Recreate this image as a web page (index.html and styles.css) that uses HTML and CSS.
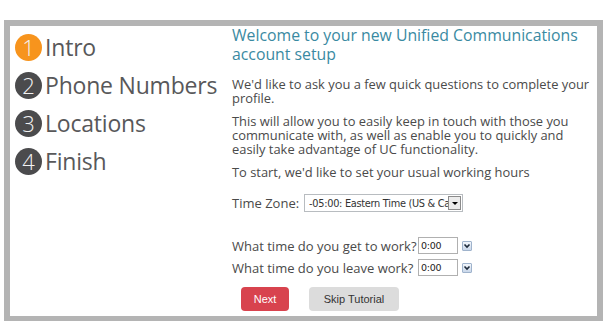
FILE: index.html
```html
<!DOCTYPE html>
<html lang="en">
<head>
    <meta charset="UTF-8">
    <meta name="viewport" content="width=device-width, initial-scale=1.0">
    <title>UC account setup</title>
    <link rel="stylesheet" href="styles.css">
</head>
<body>
    <div class="wizard">
        <ul class="steps">
            <li class="step current"><span class="num">1</span>Intro</li>
            <li class="step"><span class="num">2</span>Phone Numbers</li>
            <li class="step"><span class="num">3</span>Locations</li>
            <li class="step"><span class="num">4</span>Finish</li>
        </ul>

        <div class="content">
            <h1>Welcome to your new Unified Communications account setup</h1>
            <p>We'd like to ask you a few quick questions to complete your profile.</p>
            <p>This will allow you to easily keep in touch with those you communicate with, as well as enable you to quickly and easily take advantage of UC functionality.</p>
            <p>To start, we'd like to set your usual working hours</p>

            <div class="tz-row">
                <label>Time Zone:</label>
                <div class="combo">
                    <span class="combo-text">-05:00: Eastern Time (US &amp; Canada)</span>
                    <span class="combo-btn"><span class="tri"></span></span>
                </div>
            </div>

            <div class="times">
                <div class="time-row">
                    <label>What time do you get to work?</label>
                    <span class="time-box">0:00</span>
                    <span class="spin">
                        <svg width="8" height="8" viewBox="0 0 8 8"><path d="M1.5 2.5 L4 5 L6.5 2.5" fill="none" stroke="#1d2a3a" stroke-width="1.6"/></svg>
                    </span>
                </div>
                <div class="time-row">
                    <label>What time do you leave work?</label>
                    <span class="time-box">0:00</span>
                    <span class="spin">
                        <svg width="8" height="8" viewBox="0 0 8 8"><path d="M1.5 2.5 L4 5 L6.5 2.5" fill="none" stroke="#1d2a3a" stroke-width="1.6"/></svg>
                    </span>
                </div>
            </div>

            <div class="actions">
                <button class="btn next">Next</button>
                <button class="btn skip">Skip Tutorial</button>
            </div>
        </div>
    </div>
</body>
</html>
```

FILE: styles.css
```css
/* wizard layout */
body {
    margin: 0;
    background: #ffffff;
    font-family: 'Open Sans', sans-serif;
}

.wizard {
    display: flex;
    box-sizing: border-box;
    width: 599px;
    height: 301px;
    margin: 20px 0 0 4px;
    border: 6px solid #b4b4b4;
    border-bottom-width: 5px;
    background: #ffffff;
}

.steps {
    flex: 0 0 222px;
    list-style: none;
    margin: 0;
    padding: 2px 0 0 5px;
    box-sizing: border-box;
}

.step {
    display: flex;
    align-items: center;
    height: 38px;
    font-size: 23px;
    line-height: 38px;
    color: #58585a;
    letter-spacing: -0.2px;
}

.num {
    display: inline-flex;
    justify-content: center;
    align-items: center;
    width: 27px;
    height: 27px;
    margin-right: 3px;
    border-radius: 50%;
    background: #4b4b4d;
    color: #f2f2f2;
    font-size: 22px;
    font-weight: 300;
    line-height: 1;
}

.current .num {
    background: #f7941d;
}

.content {
    flex: 1;
    padding-right: 6px;
}

h1 {
    margin: 0;
    font-size: 15.8px;
    font-weight: normal;
    line-height: 19px;
    color: #3a8aa2;
}

p {
    margin: 9px 0 0;
    font-size: 12.9px;
    line-height: 14px;
    color: #4a4a4a;
}

h1 + p {
    margin-top: 13px;
}

label {
    font-size: 13px;
    color: #4a4a4a;
}

.tz-row {
    display: flex;
    align-items: center;
    height: 18px;
    margin-top: 15px;
}

.tz-row label {
    margin-right: 5px;
}

.combo {
    display: flex;
    align-items: center;
    box-sizing: border-box;
    width: 159px;
    height: 18px;
    border: 1px solid #b8bcc0;
    padding-left: 4px;
    overflow: hidden;
}

.combo-text {
    flex: 1;
    white-space: nowrap;
    overflow: hidden;
    font-family: 'DejaVu Sans', sans-serif;
    font-size: 9.8px;
    color: #333333;
    letter-spacing: -0.3px;
}

.combo-btn {
    display: flex;
    justify-content: center;
    align-items: center;
    box-sizing: border-box;
    width: 13px;
    height: 14px;
    margin-right: 1px;
    border: 1px solid #8b8b8b;
    background: #ececec;
}

.tri {
    width: 0;
    height: 0;
    border-left: 3px solid transparent;
    border-right: 3px solid transparent;
    border-top: 3px solid #000000;
}

.times {
    margin-top: 25px;
}

.time-row {
    display: flex;
    align-items: center;
    height: 17px;
    margin-bottom: 5px;
}

.time-row label {
    width: 186px;
    white-space: nowrap;
}

.time-box {
    box-sizing: border-box;
    width: 40px;
    height: 17px;
    padding: 1px 2px;
    border: 1px solid #b0b0b0;
    font-family: 'DejaVu Sans', sans-serif;
    font-size: 9.5px;
    line-height: 14px;
    color: #222222;
    letter-spacing: -0.3px;
}

.spin {
    display: flex;
    justify-content: center;
    align-items: center;
    box-sizing: border-box;
    width: 10px;
    height: 10px;
    margin-left: 4px;
    border: 1px solid #9fb3cc;
    border-radius: 1px;
    background: linear-gradient(#f2f6fb, #c9d7ea);
}

.actions {
    display: flex;
    gap: 20px;
    margin-top: 11px;
    padding-left: 9px;
}

.btn {
    height: 24px;
    border: none;
    border-radius: 4px;
    font-family: 'Liberation Sans', Arial, sans-serif;
    font-size: 11px;
    cursor: pointer;
}

.next {
    width: 48px;
    background: #d8434e;
    color: #ffffff;
}

.skip {
    width: 90px;
    background: #dcdcdc;
    color: #333333;
}
```
